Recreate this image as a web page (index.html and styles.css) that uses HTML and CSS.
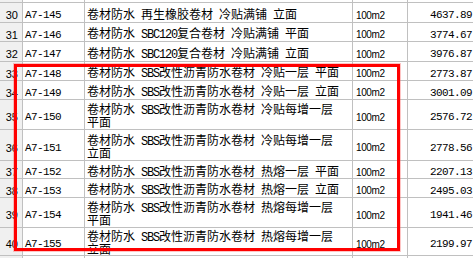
FILE: index.html
```html
<!DOCTYPE html>
<html lang="zh-CN">
<head>
<meta charset="utf-8">
<title>定额列表</title>
<link rel="stylesheet" href="styles.css">
</head>
<body>
<div class="view">
  <div class="sheet">
    <div class="row"><div class="num">29</div><div class="code">A7-144</div><div class="desc"><span class="t">卷材防水 再生橡胶卷材 冷贴满铺 平面</span></div><div class="unit">100m2</div><div class="price">4093.68</div></div>
    <div class="row h19"><div class="num">30</div><div class="code">A7-145</div><div class="desc"><span class="t">卷材防水 再生橡胶卷材 冷贴满铺 立面</span></div><div class="unit">100m2</div><div class="price">4637.89</div></div>
    <div class="row"><div class="num">31</div><div class="code">A7-146</div><div class="desc"><span class="t">卷材防水 <span class="lat">SBC120</span>复合卷材 冷贴满铺 平面</span></div><div class="unit">100m2</div><div class="price">3774.67</div></div>
    <div class="row h19"><div class="num">32</div><div class="code">A7-147</div><div class="desc"><span class="t">卷材防水 <span class="lat">SBC120</span>复合卷材 冷贴满铺 立面</span></div><div class="unit">100m2</div><div class="price">3976.87</div></div>
    <div class="row"><div class="num">33</div><div class="code">A7-148</div><div class="desc"><span class="t">卷材防水 <span class="lat">SBS</span>改性沥青防水卷材 冷贴一层 平面</span></div><div class="unit">100m2</div><div class="price">2773.87</div></div>
    <div class="row"><div class="num">34</div><div class="code">A7-149</div><div class="desc"><span class="t">卷材防水 <span class="lat">SBS</span>改性沥青防水卷材 冷贴一层 立面</span></div><div class="unit">100m2</div><div class="price">3001.09</div></div>
    <div class="row h29"><div class="num">35</div><div class="code">A7-150</div><div class="desc"><span class="t">卷材防水 <span class="lat">SBS</span>改性沥青防水卷材 冷贴每增一层 平面</span></div><div class="unit">100m2</div><div class="price">2576.72</div></div>
    <div class="row h30"><div class="num">36</div><div class="code">A7-151</div><div class="desc"><span class="t">卷材防水 <span class="lat">SBS</span>改性沥青防水卷材 冷贴每增一层 立面</span></div><div class="unit">100m2</div><div class="price">2778.56</div></div>
    <div class="row h17"><div class="num">37</div><div class="code">A7-152</div><div class="desc"><span class="t">卷材防水 <span class="lat">SBS</span>改性沥青防水卷材 热熔一层 平面</span></div><div class="unit">100m2</div><div class="price">2207.13</div></div>
    <div class="row"><div class="num">38</div><div class="code">A7-153</div><div class="desc"><span class="t">卷材防水 <span class="lat">SBS</span>改性沥青防水卷材 热熔一层 立面</span></div><div class="unit">100m2</div><div class="price">2495.03</div></div>
    <div class="row h29"><div class="num">39</div><div class="code">A7-154</div><div class="desc"><span class="t">卷材防水 <span class="lat">SBS</span>改性沥青防水卷材 热熔每增一层 平面</span></div><div class="unit">100m2</div><div class="price">1941.46</div></div>
    <div class="row h27"><div class="num">40</div><div class="code">A7-155</div><div class="desc"><span class="t">卷材防水 <span class="lat">SBS</span>改性沥青防水卷材 热熔每增一层 立面</span></div><div class="unit">100m2</div><div class="price">2199.97</div></div>
    <div class="row"><div class="num">41</div><div class="code">A7-156</div><div class="desc"><span class="t">卷材防水 <span class="lat">SBS</span>改性沥青防水卷材 热熔满铺</span></div><div class="unit">100m2</div><div class="price">2310.54</div></div>
  </div>
  <div class="mark"></div>
</div>
</body>
</html>
```

FILE: styles.css
```css
html, body {
  margin: 0;
  padding: 0;
  background: #ffffff;
}

.view {
  position: relative;
  width: 473px;
  height: 258px;
  overflow: hidden;
  background: #ffffff;
}

.sheet {
  display: flex;
  flex-direction: column;
  gap: 1px;
  margin-top: -16px;
  width: 474px;
  background: #c0c0c0;
  padding-bottom: 1px;
}

.row {
  display: grid;
  grid-template-columns: 22px 61px 267px 54px 66px;
  column-gap: 1px;
  height: 18px;
  flex: none;
  color: #000000;
}

.row.h17 { height: 17px; }
.row.h19 { height: 19px; }
.row.h27 { height: 27px; }
.row.h29 { height: 29px; }
.row.h30 { height: 30px; }

.row > div {
  background: #ffffff;
  display: flex;
  align-items: center;
  overflow: hidden;
  padding-top: 5px;
  box-sizing: border-box;
  white-space: nowrap;
}

.row > .num {
  background: #f0f0f0;
  justify-content: flex-end;
  padding-right: 4px;
  font: 11px "Liberation Sans", Arial, sans-serif;
}

.code {
  padding-left: 2px;
  font: 11px "Liberation Mono", "Courier New", monospace;
  letter-spacing: -0.6px;
}

.row > .desc {
  padding-left: 2px;
  padding-right: 2px;
  padding-top: 7px;
  white-space: normal;
  font: 12px/13px "Liberation Mono", "Noto Sans CJK SC", monospace;
  word-spacing: -1.2px;
}

.t {
  display: block;
}

.lat {
  letter-spacing: -1.2px;
}

.unit {
  padding-left: 3px;
  font: 10px "Liberation Sans", Arial, sans-serif;
  letter-spacing: -0.4px;
}

.row > .price {
  justify-content: flex-end;
  padding-right: 2px;
  font: 11px "Liberation Mono", "Courier New", monospace;
  letter-spacing: -0.6px;
}

.mark {
  position: absolute;
  left: 14px;
  top: 64px;
  width: 386px;
  height: 187px;
  box-sizing: border-box;
  border: 3px solid #ff0000;
  box-shadow: 0 0 0 1px rgba(255, 90, 90, 0.35);
}
```
